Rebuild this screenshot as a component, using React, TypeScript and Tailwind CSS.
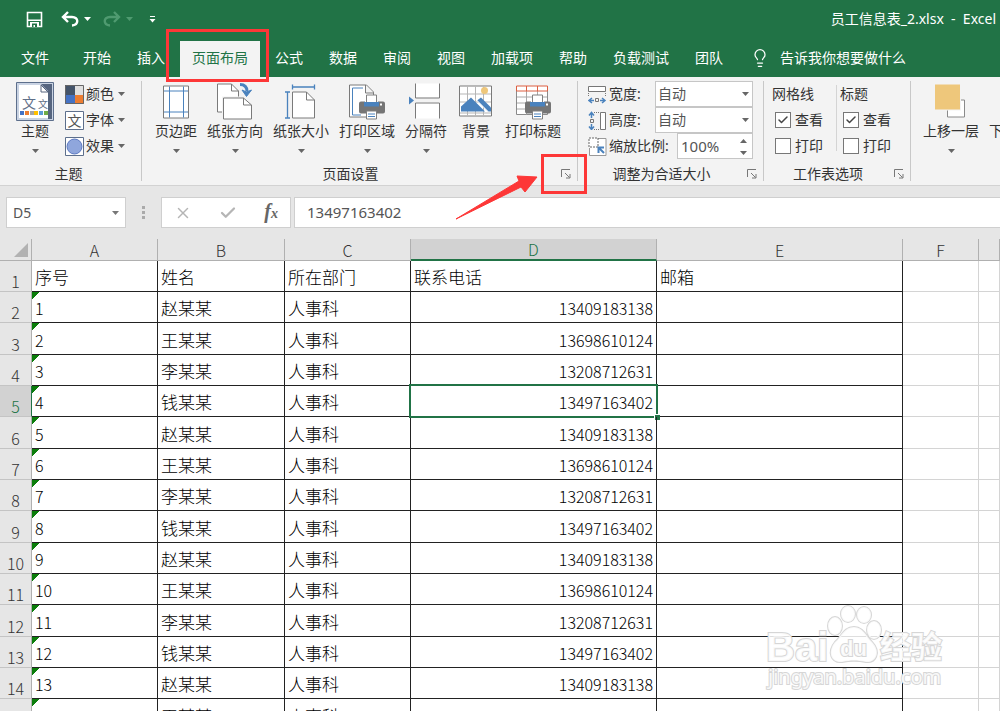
import { useState } from 'react';
import type { ReactNode } from 'react';
import { Check, ChevronDown, Lightbulb, X } from 'lucide-react';
import { clsx } from 'clsx';

const NAMES = ['赵某某', '王某某', '李某某', '钱某某'];
const PHONES = ['13409183138', '13698610124', '13208712631', '13497163402'];
const HEADERS = ['序号', '姓名', '所在部门', '联系电话', '邮箱'];
const COLUMNS = ['A', 'B', 'C', 'D', 'E', 'F', ''];

const people = Array.from({ length: 14 }, (_, i) => ({
  id: i + 1,
  name: NAMES[i % 4],
  department: '人事科',
  phone: PHONES[i % 4],
}));

const tabsBefore = ['开始', '插入'];
const tabsAfter = ['公式', '数据', '审阅', '视图', '加载项', '帮助', '负载测试', '团队'];

function Caret({ className }: { className?: string }) {
  return (
    <svg viewBox="0 0 7 4" className={clsx('h-1 w-[7px] shrink-0 fill-current', className)} aria-hidden="true">
      <path d="M0 0h7L3.500 4z" />
    </svg>
  );
}

function Icon({ children }: { children: ReactNode }) {
  return (
    <svg viewBox="0 0 38 38" className="mt-px h-[39px] w-[38px] shrink-0" fill="none" aria-hidden="true">
      {children}
    </svg>
  );
}

function Printer() {
  return (
    <g>
      <path d="M18.500 21v-8.500h10V21" fill="#fff" stroke="#808080" />
      <path d="M13 19h4v4h13v-4h5a2 2 0 0 1 2 2v8a2 2 0 0 1-2 2H13a2 2 0 0 1-2-2v-8a2 2 0 0 1 2-2z" fill="#757575" />
      <path d="M16 19.500h15V24H16z" fill="#4a82bd" />
      <path d="M32 21h2v2h-2z" fill="#fff" />
      <path d="M18.500 28.500h10v8h-10z" fill="#fff" stroke="#808080" />
      <path d="M20 31.500h7M20 34h7" stroke="#4a82bd" />
    </g>
  );
}

function ThemeIcon() {
  return (
    <svg viewBox="0 0 38 39" className="mt-px h-[39px] w-[38px] shrink-0" fill="none" aria-hidden="true">
      <path d="M.5.5h37v38H.5z" fill="#c9d3e3" stroke="#5d6f8c" />
      <path d="M25 2h11v35h-4V9z" fill="#56657f" />
      <path d="M3 3h22l7 7v26H3z" fill="#fff" />
      <path d="M25 3v7h7z" fill="#fff" stroke="#56657f" />
      <text x="6" y="26" fontSize="14" fill="#5f6f88">文</text>
      <text x="22" y="26" fontSize="10" fill="#5f6f88">文</text>
      <path d="M4 29h4v4H4z" fill="#4472c4" />
      <path d="M9 29h4v4H9z" fill="#ed7d31" />
      <path d="M14 29h4v4h-4z" fill="#a5a5a5" />
      <path d="M18 29h4v4h-4z" fill="#ffc000" />
      <path d="M23 29h4v4h-4z" fill="#5b9bd5" />
      <path d="M28 29h4v4h-4z" fill="#70ad47" />
    </svg>
  );
}

function MarginsIcon() {
  return (
    <Icon>
      <path d="M6.500 3.500h25v32h-25z" fill="#fff" stroke="#7a7a7a" />
      <path d="M12.500 4v31M26.500 4v31M7 8.500h24M7 29.500h24" stroke="#4a82bd" />
    </Icon>
  );
}

function OrientationIcon() {
  return (
    <Icon>
      <path d="M1.500 1.500h14l7 7v21h-21z" fill="#fff" stroke="#7a7a7a" />
      <path d="M15.500 1.500v7h7" stroke="#7a7a7a" />
      <path d="M6 14h31v24H6z" fill="#f3f3f3" />
      <path d="M7.500 15.500h20l8 7v14h-28z" fill="#fff" stroke="#7a7a7a" />
      <path d="M27.500 15.500v7h8" stroke="#7a7a7a" />
      <path d="M24 2c5 0 7 3 7 7" stroke="#4a82bd" strokeWidth="3" />
      <path d="M26 7.500l4.500 6.500 5-6.500-5 2z" fill="#4a82bd" stroke="#4a82bd" />
    </Icon>
  );
}

function SizeIcon() {
  return (
    <Icon>
      <path d="M10.500 9.500h14l8 8v18h-22z" fill="#fff" stroke="#7a7a7a" />
      <path d="M24.500 9.500v8h8" stroke="#7a7a7a" />
      <path d="M10.500 2v5M32.500 2v5M10.500 4.500h22M3 9.500h5M3 35.500h5M5.500 9.500v26" stroke="#4a82bd" strokeWidth="1.300" />
    </Icon>
  );
}

function PrintAreaIcon() {
  return (
    <Icon>
      <path d="M1.500 2.500h17l7 7v25h-24z" fill="#fff" stroke="#7a7a7a" />
      <path d="M15 5.500H4.500v27H13" stroke="#4a82bd" />
      <path d="M17.500 2.500v8h8" fill="#f3f3f3" stroke="#7a7a7a" />
      <Printer />
    </Icon>
  );
}

function BreaksIcon() {
  return (
    <Icon>
      <path d="M8.500 1h24v14h-24zM8.500 20h24v16h-24z" fill="#fff" />
      <path d="M8.500 1v14.500h24V1M8.500 36V20.500h24V36" stroke="#7a7a7a" />
      <path d="M2 14l5 4-5 4z" fill="#4a82bd" />
    </Icon>
  );
}

function BackgroundIcon() {
  return (
    <Icon>
      <path d="M2.500 3.500h32v30h-32z" fill="#fff" stroke="#7a7a7a" />
      <path d="M10.500 4v29M18.500 4v29M26.500 4v29M3 11.500h31M3 19.500h31M3 30.500h31" stroke="#b5b5b5" />
      <path d="M4 29v-5l10-9 14 14z" fill="#4a82bd" />
      <path d="M20 18l4-3 10 10v4h-3z" fill="#4a82bd" />
      <path d="M19 17l12 12" stroke="#fff" />
      <circle cx="27.500" cy="8" r="3.500" fill="#eec77b" />
    </Icon>
  );
}

function PrintTitlesIcon() {
  return (
    <Icon>
      <path d="M2.500 8v24h31V8" fill="#fff" stroke="#8a8a8a" />
      <path d="M12.500 8v24M23.500 8v24M3 14.500h30M3 20.500h30M3 26.500h30" stroke="#a8a8a8" />
      <path d="M2.500 3.500h31v5h-31zM12.500 3.500v5M23.500 3.500v5" fill="#fff" stroke="#dc5f41" />
      <Printer />
    </Icon>
  );
}

function BringForwardIcon() {
  return (
    <Icon>
      <path d="M15.500 17.500h17v17h-17z" fill="#fff" stroke="#8a8a8a" />
      <path d="M2 2h27v26H2z" fill="#f3f3f3" />
      <path d="M3 2h25v25H3z" fill="#eec77b" />
    </Icon>
  );
}

function BigButton({ label, icon, caret = true }: { label: string; icon: ReactNode; caret?: boolean }) {
  return (
    <button className="flex min-w-[46px] flex-col items-center px-1 hover:bg-gray-200">
      {icon}
      <span className="whitespace-nowrap leading-5">{label}</span>
      {caret && <Caret className="mt-2 text-[#666]" />}
    </button>
  );
}

function SmallButton({ label, icon }: { label: string; icon: ReactNode }) {
  return (
    <button className="flex h-[26px] items-center gap-0.5 hover:bg-gray-200">
      <svg viewBox="0 0 19 19" className="h-[19px] w-[19px]" fill="none" aria-hidden="true">
        {icon}
      </svg>
      {label}
      <Caret className="ml-0.5 text-[#666]" />
    </button>
  );
}

function Launcher({ label }: { label: string }) {
  return (
    <button aria-label={label} className="p-0.5 hover:bg-gray-200">
      <svg viewBox="0 0 10 10" className="h-2.5 w-2.5" fill="none" stroke="#777" aria-hidden="true">
        <path d="M.5 8V.5H9M4 4l4.500 4.500M9 5v4H5" />
      </svg>
    </button>
  );
}

interface GroupProps {
  title: string;
  launcher?: ReactNode;
  className?: string;
  bodyClassName?: string;
  children: ReactNode;
}

function Group({ title, launcher, className, bodyClassName, children }: GroupProps) {
  return (
    <section className={clsx('my-1 flex shrink-0 flex-col border-r border-[#c8c8c8]', className)}>
      <div className={clsx('flex h-[82px] shrink-0', bodyClassName)}>{children}</div>
      <div className="flex h-[18px] items-center pt-1 pr-1">
        <h2 className="flex-1 text-center leading-[14px]">{title}</h2>
        {launcher}
      </div>
    </section>
  );
}

function SizeSelect({ label, icon }: { label: string; icon: ReactNode }) {
  return (
    <label className="flex h-[26px] items-center">
      <svg viewBox="0 0 19 19" className="h-[19px] w-[19px]" fill="none" aria-hidden="true">
        {icon}
      </svg>
      <span className="ml-0.5 flex-1">{label}</span>
      <span className="relative">
        <select className="block h-[26px] w-[98px] appearance-none border border-[#c6c6c6] bg-white pl-0.5 text-[#555]">
          <option>自动</option>
          <option>1 页</option>
        </select>
        <Caret className="pointer-events-none absolute top-[11px] right-1 text-[#666]" />
      </span>
    </label>
  );
}

function Tick({ label, checked }: { label: string; checked?: boolean }) {
  return (
    <label className="flex h-[26px] items-center gap-1 pl-[3px]">
      <span className="relative flex">
        <input type="checkbox" defaultChecked={checked} className="peer h-4 w-4 appearance-none border border-[#777] bg-white" />
        <Check className="pointer-events-none absolute inset-0 hidden h-4 w-4 p-0.5 text-[#444] peer-checked:block" strokeWidth={3} />
      </span>
      {label}
    </label>
  );
}

function TitleBar() {
  return (
    <header className="flex h-[38px] items-center justify-between bg-[#217346] pr-1 pl-[26px] text-white">
      <div className="flex items-center">
        <button aria-label="保存">
          <svg viewBox="0 0 17 17" className="h-[17px] w-[17px]" fill="none" aria-hidden="true">
            <path d="M1.500 1.500h14v14h-14z" stroke="#fff" strokeWidth="1.600" />
            <path d="M2 8.500h13v1.500H2zM4 11h9v5H4z" fill="#fff" />
            <path d="M6 12.500h5V16H9v-2H7.500v2H6z" fill="#217346" />
          </svg>
        </button>
        <button aria-label="撤消" className="ml-[18px] flex items-center gap-[5px]">
          <svg viewBox="0 0 18 16" className="h-4 w-[18px]" fill="none" stroke="#fff" strokeWidth="2.400" aria-hidden="true">
            <path d="M7 1L2 6l5 5M2.500 6H11c7 0 7 8 0 8.500" />
          </svg>
          <Caret />
        </button>
        <button aria-label="恢复" className="ml-3 flex items-center gap-[5px] text-[#4f9a70]">
          <svg viewBox="0 0 18 16" className="h-4 w-[18px]" fill="none" stroke="currentColor" strokeWidth="2.400" aria-hidden="true">
            <path d="M11 1l5 5-5 5M15.500 6H7c-7 0-7 8 0 8.500" />
          </svg>
          <Caret />
        </button>
        <button aria-label="自定义快速访问工具栏" className="ml-4">
          <svg viewBox="0 0 7 7" className="h-[7px] w-[7px] fill-white" aria-hidden="true">
            <path d="M1 0h5v1H1zM.5 3h6L3.500 6.500z" />
          </svg>
        </button>
      </div>
      <h1 className="whitespace-pre">员工信息表_2.xlsx  -  Excel</h1>
    </header>
  );
}

function Tabs() {
  return (
    <nav className="flex h-[39px] items-stretch bg-[#217346] whitespace-nowrap text-white">
      <button className="px-[21px]">文件</button>
      {tabsBefore.map((tab) => (
        <button key={tab} className="px-[13px]">{tab}</button>
      ))}
      <button className="relative z-10 mx-0.5 mt-[3px] bg-[#f3f3f3] px-3 pb-[3px] text-[#217346]">
        页面布局
        <span className="pointer-events-none absolute -top-3 -right-[9px] -bottom-[5px] -left-3.5 border-3 border-[#fd3737]" />
      </button>
      {tabsAfter.map((tab) => (
        <button key={tab} className="px-[13px]">{tab}</button>
      ))}
      <button className="ml-3.5 flex items-center gap-2.5">
        <Lightbulb className="h-5 w-5" strokeWidth={1.5} />
        告诉我你想要做什么
      </button>
    </nav>
  );
}

function Ribbon() {
  return (
    <div className="flex h-[109px] overflow-x-clip border-b border-[#d2d2d2] bg-[#f3f3f3] text-[#333]">
      <Group title="主题" className="w-[142px]" bodyClassName="pl-3">
        <BigButton label="主题" icon={<ThemeIcon />} />
        <div className="ml-[7px]">
          <SmallButton
            label="颜色"
            icon={
              <>
                <path d="M0 0h10v10H0z" fill="#44546a" />
                <path d="M10 0h9v10h-9z" fill="#e0e0e0" />
                <path d="M0 10h10v9H0z" fill="#4472c4" />
                <path d="M10 10h9v9h-9z" fill="#ed7d31" />
                <path d="M.5.5h18v18H.5z" stroke="#666" />
              </>
            }
          />
          <SmallButton
            label="字体"
            icon={
              <>
                <path d="M.5.5h18v18H.5z" fill="#fff" stroke="#5d6f8c" />
                <text x="2.500" y="15" fontSize="14" fill="#555">文</text>
              </>
            }
          />
          <SmallButton
            label="效果"
            icon={
              <>
                <path d="M.5.5h18v18H.5z" fill="#fff" stroke="#5d6f8c" />
                <circle cx="9.500" cy="9.500" r="7.500" fill="#8fa6dc" stroke="#5b78c0" />
              </>
            }
          />
        </div>
      </Group>

      <Group
        title="页面设置"
        className="w-[436px]"
        bodyClassName="gap-0.5 pl-[9px]"
        launcher={
          <div className="relative z-10 flex">
            <Launcher label="页面设置" />
            <span className="pointer-events-none absolute -inset-y-[13px] -right-[14px] -left-[18px] border-3 border-[#fd3737]" />
            <svg viewBox="0 0 84 46" className="pointer-events-none absolute top-2 right-[34px] h-[46px] w-[84px]" aria-hidden="true">
              <path d="M1 44L64 6 62 1 82 2 70 17 66 12z" fill="#fd3737" stroke="#fd3737" strokeLinejoin="round" />
            </svg>
          </div>
        }
      >
        <BigButton label="页边距" icon={<MarginsIcon />} />
        <BigButton label="纸张方向" icon={<OrientationIcon />} />
        <BigButton label="纸张大小" icon={<SizeIcon />} />
        <BigButton label="打印区域" icon={<PrintAreaIcon />} />
        <BigButton label="分隔符" icon={<BreaksIcon />} />
        <BigButton label="背景" icon={<BackgroundIcon />} caret={false} />
        <BigButton label="打印标题" icon={<PrintTitlesIcon />} caret={false} />
      </Group>

      <Group title="调整为合适大小" className="w-[186px]" bodyClassName="pl-2.5" launcher={<Launcher label="调整为合适大小" />}>
        <div className="w-[165px]">
          <SizeSelect
            label="宽度:"
            icon={
              <>
                <path d="M.5 1.500h17v5H.5z" fill="#fff" stroke="#777" />
                <path d="M.5 8v4M17.500 8v4" stroke="#777" strokeDasharray="1 1" />
                <path d="M1 15.500h5M12 15.500h5M4 13l-3 2.500L4 18M14 13l3 2.500-3 2.500" stroke="#4a82bd" strokeWidth="1.500" />
                <path d="M7.500 13.500h3v3h-3z" stroke="#777" />
              </>
            }
          />
          <SizeSelect
            label="高度:"
            icon={
              <>
                <path d="M12.500 1.500h5v17h-5z" fill="#fff" stroke="#777" />
                <path d="M6 1.500h6M6 18.500h6" stroke="#777" strokeDasharray="1 1" />
                <path d="M3.500 2v5M3.500 13v5M1 4.500l2.500-3L6 4.500M1 15.500l2.500 3 2.500-3" stroke="#4a82bd" strokeWidth="1.500" />
                <path d="M2.500 8.500h3v3h-3z" stroke="#777" />
              </>
            }
          />
          <label className="flex h-[26px] items-center">
            <svg viewBox="0 0 19 19" className="h-[19px] w-[19px]" fill="none" aria-hidden="true">
              <path d="M10 1.500h8v17H1.500V11" fill="#fff" stroke="#999" />
              <path d="M1 1h9v9H1z" fill="#fff" stroke="#666" strokeDasharray="2 1" />
              <path d="M16 16l-5-5M10.500 16v-5.500H16" stroke="#4a82bd" strokeWidth="2" />
            </svg>
            <span className="ml-0.5 flex-1 whitespace-nowrap">缩放比例:</span>
            <span className="relative">
              <input defaultValue="100%" className="block h-[26px] w-[76px] border border-[#c6c6c6] bg-white pl-[3px] text-[15px] text-[#555]" />
              <Caret className="pointer-events-none absolute top-1.5 right-1.5 rotate-180 text-[#666]" />
              <Caret className="pointer-events-none absolute right-1.5 bottom-1 text-[#666]" />
            </span>
          </label>
        </div>
      </Group>

      <Group title="工作表选项" className="w-[147px]" bodyClassName="pl-2" launcher={<Launcher label="工作表选项" />}>
        <fieldset className="w-[60px]">
          <legend className="h-[26px] leading-[26px]">网格线</legend>
          <Tick label="查看" checked />
          <Tick label="打印" />
        </fieldset>
        <div className="mt-1 mb-3 ml-1 w-px bg-[#d4d4d4]" />
        <fieldset className="pl-[3px]">
          <legend className="h-[26px] leading-[26px]">标题</legend>
          <Tick label="查看" checked />
          <Tick label="打印" />
        </fieldset>
      </Group>

      <div className="mt-1 flex h-[82px] gap-0.5 pl-2">
        <BigButton label="上移一层" icon={<BringForwardIcon />} />
        <BigButton label="下移一层" icon={<BringForwardIcon />} />
      </div>
    </div>
  );
}

function FormulaBar({ value }: { value: string }) {
  return (
    <div className="flex h-[53px] items-center bg-[#e6e6e6] pl-1.5 text-[#555]">
      <div className="flex h-[31px] w-[120px] items-center border border-[#cfcfcf] bg-white pr-1.5">
        <input aria-label="名称框" defaultValue="D5" className="w-full min-w-0 pl-1.5 text-sm" />
        <button aria-label="名称列表">
          <Caret className="text-[#777]" />
        </button>
      </div>
      <svg viewBox="0 0 3 13" className="mx-4 h-[13px] w-[3px] fill-[#aaa]" aria-hidden="true">
        <path d="M0 0h3v3H0zM0 5h3v3H0zM0 10h3v3H0z" />
      </svg>
      <div className="flex h-[31px] w-[130px] items-center justify-between border border-[#cfcfcf] bg-white px-3">
        <button aria-label="取消">
          <X className="h-[18px] w-[18px] text-[#b5b5b5]" strokeWidth={2} />
        </button>
        <button aria-label="输入">
          <Check className="h-[18px] w-[18px] text-[#b5b5b5]" strokeWidth={3} />
        </button>
        <button aria-label="插入函数" className="font-['Liberation_Serif',serif] text-xl leading-5 font-bold text-[#666] italic">
          f<span className="text-sm">x</span>
        </button>
      </div>
      <div className="ml-[3px] flex h-[31px] flex-1 items-center justify-between border-y border-l border-[#cfcfcf] bg-white">
        <input aria-label="编辑栏" value={value} readOnly className="w-full pl-3 text-[15px]" />
        <ChevronDown className="hidden h-4 w-4 xl:block" />
      </div>
    </div>
  );
}

function RowHeader({ row, active }: { row: number; active: boolean }) {
  return (
    <th
      scope="row"
      className={clsx(
        'border-r border-b p-0 align-bottom text-base leading-5 font-light',
        active ? 'border-r-[#217346] border-b-[#c4c4c4] bg-[#d2d2d2] text-[#217346]' : 'border-r-[#b0b0b0] border-b-[#c4c4c4] bg-[#e6e6e6] text-[#333]'
      )}
    >
      {row}
    </th>
  );
}

function Sheet({ selected, onSelect }: { selected: number; onSelect: (row: number) => void }) {
  const cell = 'border-r border-b border-[#222] pt-0.5 pr-[3px] pb-0 pl-[3px] whitespace-nowrap';
  const empty = 'border-r border-b border-[#d4d4d4]';

  return (
    <table className="w-full table-fixed border-separate border-spacing-0 bg-white font-['Noto_Sans_CJK_SC',sans-serif] text-[17px] leading-6 font-light text-black">
      <colgroup>
        <col className="w-8" />
        <col className="w-[126px]" />
        <col className="w-[127px]" />
        <col className="w-[126px]" />
        <col className="w-[246px]" />
        <col className="w-[246px]" />
        <col className="w-[76px]" />
        <col />
      </colgroup>
      <thead>
        <tr className="h-[22px] bg-[#e6e6e6] text-base leading-5 text-[#333]">
          <th className="border-r border-b border-[#b0b0b0] p-0">
            <svg viewBox="0 0 14 14" className="ml-3.5 h-3.5 w-3.5 fill-[#b2b2b2]" aria-hidden="true">
              <path d="M14 0v14H0z" />
            </svg>
          </th>
          {COLUMNS.map((col, i) => (
            <th
              key={i}
              scope="col"
              className={clsx(
                'border-r p-0 font-light',
                col === 'D' ? 'border-r-[#b0b0b0] border-b-2 border-b-[#217346] bg-[#d2d2d2] text-[#217346]' : 'border-b border-[#b0b0b0]'
              )}
            >
              {col}
            </th>
          ))}
        </tr>
      </thead>
      <tbody>
        <tr className="h-[31px]">
          <RowHeader row={1} active={selected === 1} />
          {HEADERS.map((h) => (
            <td key={h} className={cell}>{h}</td>
          ))}
          <td className={empty} />
          <td className={empty} />
        </tr>
        {people.map((p) => {
          const row = p.id + 1;
          const active = row === selected;
          return (
            <tr key={p.id} onClick={() => onSelect(row)} className={row % 3 === 0 ? 'h-8' : 'h-[31px]'}>
              <RowHeader row={row} active={active} />
              <td className={clsx(cell, 'bg-[linear-gradient(135deg,#0b7d0b_5px,transparent_5px)] text-base')}>{p.id}</td>
              <td className={cell}>{p.name}</td>
              <td className={cell}>{p.department}</td>
              <td className={clsx(cell, 'relative text-right text-base')}>
                {p.phone}
                {active && (
                  <span className="pointer-events-none absolute -inset-0.5 border-2 border-[#217346]">
                    <span className="absolute -right-1 -bottom-1 h-1.5 w-1.5 border-t border-l border-white bg-[#217346]" />
                  </span>
                )}
              </td>
              <td className={cell} />
              <td className={empty} />
              <td className={empty} />
            </tr>
          );
        })}
      </tbody>
    </table>
  );
}

function Watermark() {
  return (
    <svg viewBox="0 0 190 90" className="pointer-events-none absolute right-[51px] bottom-4 h-[90px] w-[190px]" aria-hidden="true">
      <g fill="#fff" fillOpacity="0.85" stroke="#d6d6d6" strokeWidth="2" paintOrder="stroke">
        <ellipse cx="76" cy="21" rx="7" ry="9" />
        <ellipse cx="89" cy="9" rx="7" ry="8" />
        <ellipse cx="105" cy="10" rx="7" ry="8" />
        <ellipse cx="115" cy="25" rx="7" ry="9" />
        <path d="M95 22c9 0 12 9 18 15 10 11 3 21-6 20-9-2-15-2-24 0-11 1-15-10-7-20 7-6 9-15 19-15z" />
        <g className="font-['Liberation_Sans',sans-serif] font-bold">
          <text x="7" y="56" fontSize="40">Bai</text>
          <text x="81" y="51" fontSize="22">du</text>
        </g>
        <text x="121" y="53" fontSize="31" className="font-['Noto_Sans_CJK_SC',sans-serif] font-bold">经验</text>
        <text x="9" y="79" fontSize="20" className="font-['Noto_Sans',sans-serif]">jingyan.baidu.com</text>
      </g>
    </svg>
  );
}

export default function App() {
  const [selected, setSelected] = useState(5);
  const value = people[selected - 2].phone;

  return (
    <div className="relative flex h-screen flex-col overflow-hidden bg-[#e6e6e6] font-['Noto_Sans','Noto_Sans_CJK_SC',sans-serif] text-sm">
      <TitleBar />
      <Tabs />
      <Ribbon />
      <FormulaBar value={value} />
      <main className="min-h-0 flex-1 overflow-hidden">
        <Sheet selected={selected} onSelect={setSelected} />
      </main>
      <Watermark />
    </div>
  );
}
